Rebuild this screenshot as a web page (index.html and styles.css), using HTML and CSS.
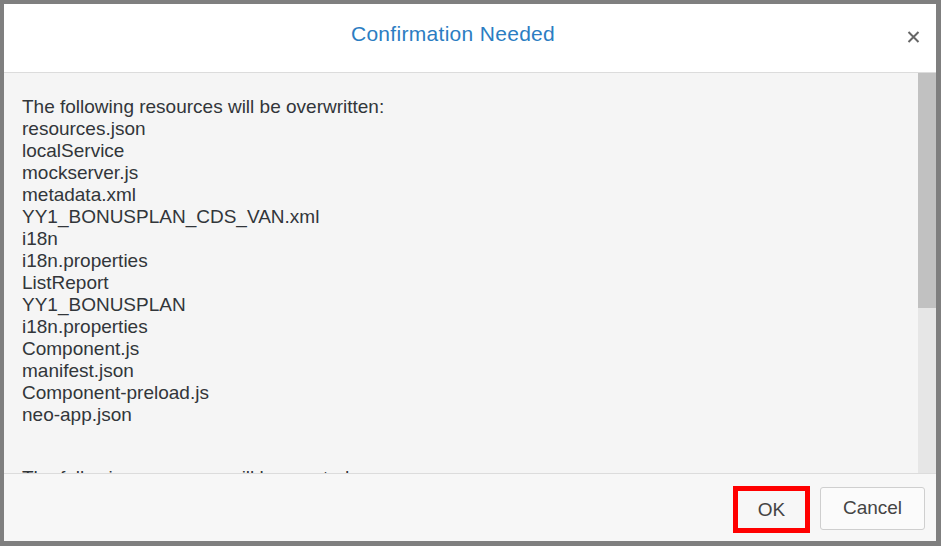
FILE: index.html
```html
<!DOCTYPE html>
<html lang="en">
<head>
<meta charset="utf-8">
<title>Confirmation Needed</title>
<link rel="stylesheet" href="styles.css">
</head>
<body>
<div class="dialog">
  <header class="dialog-header">
    <h1 class="dialog-title">Confirmation Needed</h1>
    <button class="close-btn" aria-label="Close">
      <svg width="13" height="12" viewBox="0 0 13 12"><path d="M1.5 1 L11.5 11 M11.5 1 L1.5 11" stroke="#666" stroke-width="2" fill="none"/></svg>
    </button>
  </header>
  <div class="dialog-body">
    <div class="dialog-content">
      <div class="res-list">
        <div>The following resources will be overwritten:</div>
        <div>resources.json</div>
        <div>localService</div>
        <div>mockserver.js</div>
        <div>metadata.xml</div>
        <div>YY1_BONUSPLAN_CDS_VAN.xml</div>
        <div>i18n</div>
        <div>i18n.properties</div>
        <div>ListReport</div>
        <div>YY1_BONUSPLAN</div>
        <div>i18n.properties</div>
        <div>Component.js</div>
        <div>manifest.json</div>
        <div>Component-preload.js</div>
        <div>neo-app.json</div>
      </div>
      <div class="res-list created">
        <div>The following resources will be created:</div>
        <div>webapp</div>
        <div>annotations.xml</div>
        <div>flpSandbox.html</div>
      </div>
    </div>
    <div class="scrollbar"><div class="scrollbar-thumb"></div></div>
  </div>
  <footer class="dialog-footer">
    <button class="btn btn-ok">OK</button>
    <button class="btn">Cancel</button>
  </footer>
</div>
</body>
</html>
```

FILE: styles.css
```css
html, body {
  margin: 0;
  padding: 0;
  background: #808080;
}

.dialog {
  box-sizing: border-box;
  height: 546px;
  width: 941px;
  border-style: solid;
  border-color: #7f7f7f;
  border-width: 4px 5px 5px 4px;
  display: flex;
  flex-direction: column;
  font-family: "Liberation Sans", Arial, sans-serif;
  color: #32363a;
  background: #f5f5f5;
}

.dialog-header {
  height: 68px;
  flex: none;
  background: #ffffff;
  border-bottom: 1px solid #dcdcdc;
  display: flex;
  align-items: flex-start;
}

.dialog-title {
  flex: 1;
  margin: 0;
  padding-top: 17px;
  text-align: center;
  font-weight: normal;
  font-size: 21px;
  letter-spacing: 0.3px;
  line-height: 26px;
  color: #2b7dc2;
}

.close-btn {
  flex: none;
  width: 34px;
  height: 12px;
  margin-top: 27px;
  padding: 0 0 0 5px;
  border: 0;
  background: transparent;
  display: flex;
  align-items: center;
}

.dialog-body {
  height: 400px;
  flex: none;
  display: flex;
}

.dialog-content {
  flex: 1;
  overflow: hidden;
  padding: 23px 0 0 18px;
  background: #f5f5f5;
  font-size: 19px;
  line-height: 22px;
}

.created {
  margin-top: 41px;
}

.scrollbar {
  width: 18px;
  flex: none;
  background: #e6e6e6;
}

.scrollbar-thumb {
  height: 235px;
  background: #c1c1c1;
}

.dialog-footer {
  flex: 1;
  border-top: 1px solid #dcdcdc;
  background: #f7f7f7;
  display: flex;
  justify-content: flex-end;
  align-items: center;
  gap: 10px;
  padding: 1px 11px 0 0;
}

.btn {
  box-sizing: border-box;
  height: 43px;
  width: 105px;
  border: 1px solid #cfcfcf;
  border-radius: 3px;
  background: #fbfbfb;
  font-family: "Liberation Sans", Arial, sans-serif;
  font-size: 19px;
  color: #444;
  padding: 0;
}

.btn-ok {
  width: 77px;
  height: 47px;
  border: 5px solid #ff0000;
  border-radius: 0;
  background: #f7f7f7;
  margin-top: 3px;
}
```
